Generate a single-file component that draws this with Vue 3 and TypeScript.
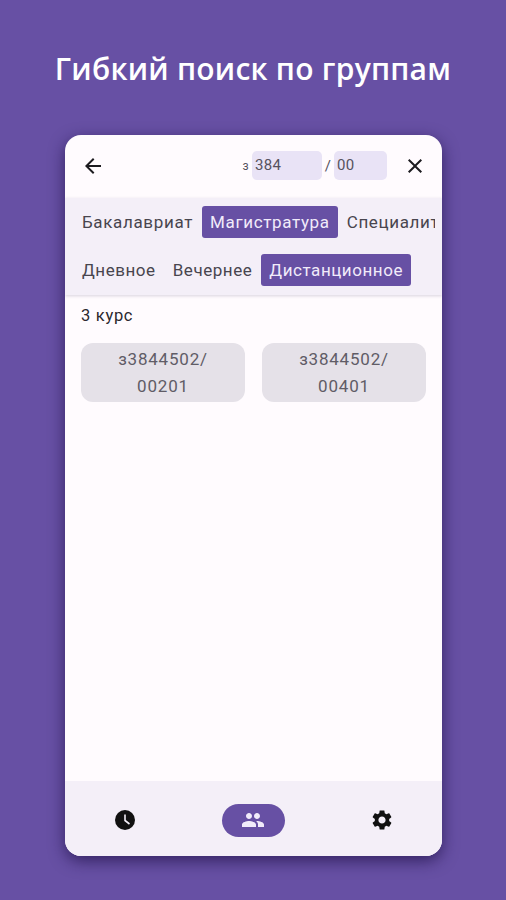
<template>
  <div class="page">
    <h1 class="title">Гибкий поиск по группам</h1>
    <div class="phone">
      <header class="toolbar">
        <button class="icon-btn">
          <svg width="24" height="24" viewBox="0 0 24 24"><path d="M20 11H7.83l5.59-5.59L12 4l-8 8 8 8 1.41-1.41L7.83 13H20v-2z" /></svg>
        </button>
        <div class="search">
          <span class="prefix">з</span>
          <span class="field field-a">384</span>
          <span class="slash">/</span>
          <span class="field field-b">00</span>
        </div>
        <button class="icon-btn close">
          <svg width="24" height="24" viewBox="0 0 24 24"><path d="M19 6.41 17.59 5 12 10.59 6.41 5 5 6.41 10.59 12 5 17.59 6.41 19 12 13.41 17.59 19 19 17.59 13.41 12z" /></svg>
        </button>
      </header>

      <section class="filters">
        <div class="chips levels">
          <span v-for="l in levels" :key="l" class="chip" :class="{ active: l === 'Магистратура' }">{{ l }}</span>
        </div>
        <div class="chips forms">
          <span v-for="f in forms" :key="f" class="chip" :class="{ active: f === 'Дистанционное' }">{{ f }}</span>
        </div>
      </section>

      <main class="list">
        <div class="course">3 курс</div>
        <div class="groups">
          <div v-for="g in groups" :key="g" class="group">{{ g }}</div>
        </div>
      </main>

      <nav class="bottom">
        <div class="tab">
          <svg width="24" height="24" viewBox="0 0 24 24">
            <circle cx="12" cy="12" r="10" />
            <path class="hand" d="M12 6.500V12.500L16.500 16" />
          </svg>
        </div>
        <div class="tab current">
          <svg width="24" height="24" viewBox="0 0 24 24"><path d="M16 11c1.660 0 2.990-1.340 2.990-3S17.660 5 16 5s-3 1.340-3 3 1.340 3 3 3zm-8 0c1.660 0 2.990-1.340 2.990-3S9.660 5 8 5 5 6.340 5 8s1.340 3 3 3zm0 2c-2.330 0-7 1.170-7 3.500V19h14v-2.500c0-2.330-4.670-3.500-7-3.500zm8 0c-.29 0-.62.020-.97.050 1.160.84 1.970 1.970 1.970 3.450V19h6v-2.500c0-2.330-4.670-3.500-7-3.500z" /></svg>
        </div>
        <div class="tab">
          <svg width="24" height="24" viewBox="0 0 24 24"><path d="M19.140 12.940c.04-.3.060-.61.060-.94 0-.32-.02-.64-.07-.94l2.030-1.580c.18-.14.230-.41.120-.61l-1.920-3.320c-.12-.22-.37-.29-.59-.22l-2.390.96c-.5-.38-1.030-.7-1.620-.94l-.36-2.540c-.04-.24-.24-.41-.48-.41h-3.840c-.24 0-.43.170-.47.410l-.36 2.540c-.59.240-1.130.570-1.620.94l-2.390-.96c-.22-.08-.47 0-.59.220L2.740 8.870c-.12.210-.08.470.12.610l2.030 1.580c-.05.300-.09.630-.09.940s.02.640.07.940l-2.030 1.580c-.18.140-.23.410-.12.610l1.920 3.320c.12.220.37.290.59.220l2.390-.96c.5.380 1.030.7 1.620.94l.36 2.540c.05.240.24.410.48.410h3.840c.24 0 .44-.17.47-.41l.36-2.540c.59-.24 1.130-.56 1.620-.94l2.390.96c.22.080.47 0 .59-.22l1.920-3.320c.12-.22.070-.47-.12-.61l-2.010-1.580zM12 15.600c-1.980 0-3.600-1.620-3.600-3.600s1.620-3.600 3.600-3.600 3.600 1.620 3.600 3.600-1.620 3.600-3.600 3.600z" /></svg>
        </div>
      </nav>
    </div>
  </div>
</template>

<script setup lang="ts">
const levels: string[] = ['Бакалавриат', 'Магистратура', 'Специалитет']
const forms: string[] = ['Дневное', 'Вечернее', 'Дистанционное']
const groups: string[] = ['з3844502/ 00201', 'з3844502/ 00401']
</script>

<style>
html,
body {
  margin: 0;
  background: #6750a4;
}
</style>

<style scoped>
.page {
  width: 506px;
  height: 900px;
  background: #6750a4;
  box-sizing: border-box;
  padding-top: 48px;
  overflow: hidden;
  font-family: Roboto, sans-serif;
}

.title {
  margin: 0;
  height: 87px;
  text-align: center;
  color: #fff;
  font-family: "Open Sans", sans-serif;
  font-size: 30px;
  font-weight: 600;
  line-height: 42px;
  letter-spacing: 0.25px;
}

.phone {
  width: 377px;
  height: 721px;
  margin-left: 65px;
  border-radius: 16px;
  background: #fffbfe;
  box-shadow: 0 5px 16px rgba(30, 15, 70, 0.7);
  display: flex;
  flex-direction: column;
  overflow: hidden;
}

.toolbar {
  height: 63px;
  flex: none;
  box-sizing: border-box;
  display: flex;
  align-items: center;
  padding: 0 15px 2px 16px;
}

.icon-btn {
  width: 24px;
  height: 24px;
  padding: 0;
  border: 0;
  background: none;
  fill: #1c1b1f;
}

.search {
  margin-left: auto;
  display: flex;
  align-items: center;
  font-size: 15px;
  color: #56525e;
  letter-spacing: 0.3px;
}

.prefix {
  font-size: 12px;
  margin-right: 3px;
}

.field {
  height: 29px;
  line-height: 29px;
  box-sizing: border-box;
  padding-left: 3px;
  border-radius: 5px;
  background: #e9e3f6;
}

.field-a {
  width: 70px;
}

.field-b {
  width: 53px;
}

.slash {
  width: 12px;
  text-align: center;
}

.close {
  margin-left: 16px;
}

.filters {
  height: 97px;
  flex: none;
  box-sizing: border-box;
  padding: 8px 0 0 9px;
  background: #f4eff8;
  box-shadow: 0 1px 3px rgba(60, 50, 90, 0.2);
  position: relative;
  overflow: hidden;
}

.chips {
  display: flex;
  gap: 1px;
  height: 32px;
  white-space: nowrap;
  letter-spacing: 0.55px;
}

.levels {
  width: 361px;
  overflow: hidden;
  letter-spacing: 0.65px;
}

.forms {
  margin-top: 16px;
}

.chip {
  flex: none;
  box-sizing: border-box;
  height: 32px;
  line-height: 32px;
  padding: 0 8px;
  border-radius: 3px;
  font-size: 17px;
  color: #48454e;
}

.chip.active {
  background: #6750a4;
  color: #f1ebfa;
}

.list {
  flex: 1;
  padding: 0 16px;
}

.course {
  margin-top: 10px;
  height: 21px;
  line-height: 21px;
  font-size: 16.500px;
  font-weight: 400;
  letter-spacing: 0.7px;
  color: #2a282e;
}

.groups {
  margin-top: 17px;
  display: grid;
  grid-template-columns: 164px 164px;
  column-gap: 17px;
}

.group {
  height: 59px;
  box-sizing: border-box;
  padding: 3px 30px 0;
  border-radius: 12px;
  background: #e5e1e8;
  text-align: center;
  font-size: 17px;
  line-height: 27px;
  letter-spacing: 0.8px;
  color: #605c66;
}

.bottom {
  height: 75px;
  flex: none;
  box-sizing: border-box;
  display: flex;
  align-items: center;
  justify-content: space-between;
  padding: 3px 29px 0 28px;
  background: #f4eff8;
}

.tab {
  width: 63px;
  height: 33px;
  border-radius: 17px;
  display: flex;
  align-items: center;
  justify-content: center;
  fill: #111;
}

.hand {
  fill: none;
  stroke: #f4eff8;
  stroke-width: 1.600;
}

.tab.current {
  background: #6750a4;
  fill: #f1ebfa;
}
</style>
